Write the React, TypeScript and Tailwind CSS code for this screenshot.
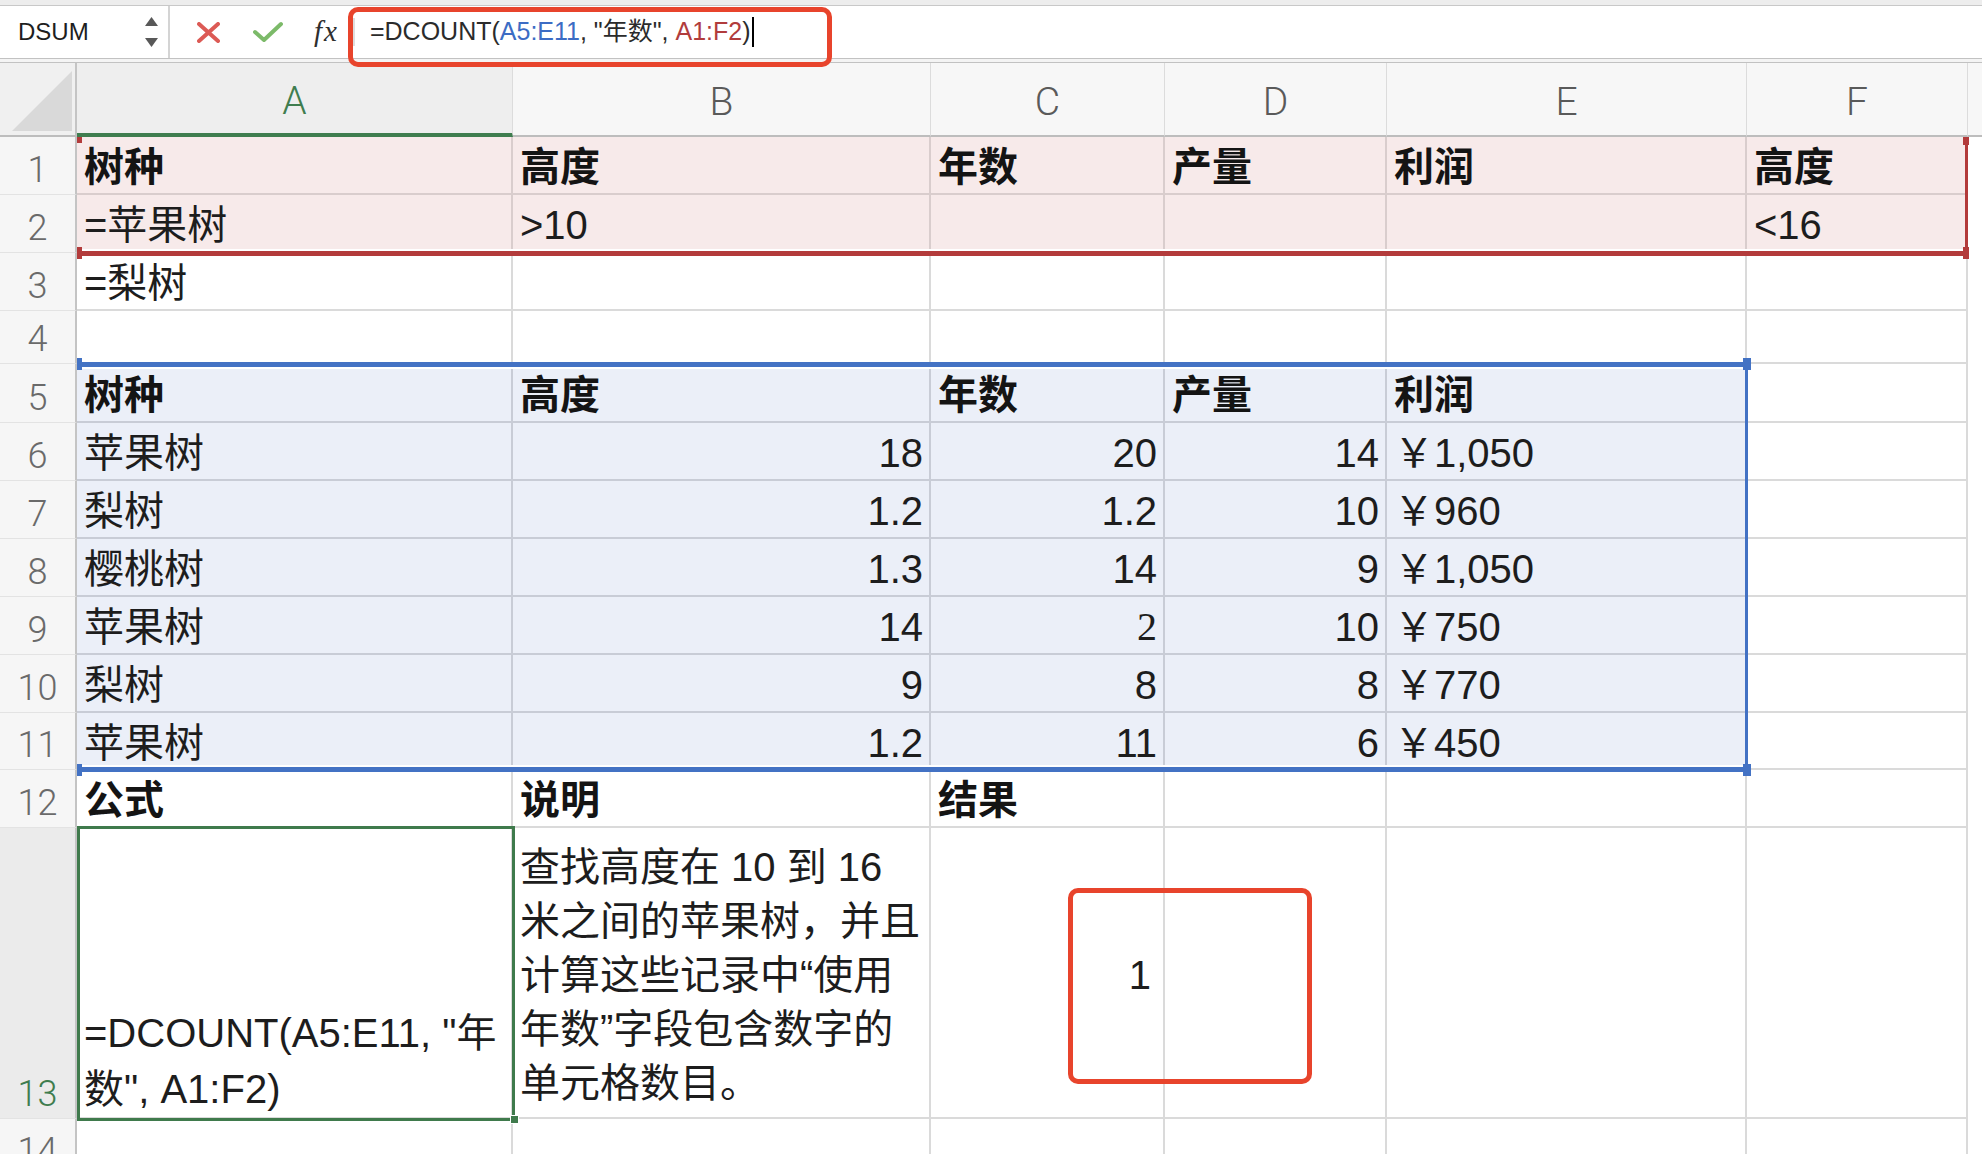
import React from "react";

type Tone = "white" | "pink" | "blue";

type CellSpec = {
  text?: string;
  right?: boolean;
  bold?: boolean;
  serif?: boolean;
};

function Cell({ spec, tone }: { spec: CellSpec; tone: Tone }) {
  const toneCls =
    tone === "pink"
      ? "bg-[#f7eaea] border-[#d9cdcd]"
      : tone === "blue"
      ? "bg-[#ebeff8] border-[#c8ccd6]"
      : "bg-white border-[#dadada]";
  return (
    <div
      className={`flex items-center overflow-hidden whitespace-nowrap border-r-2 border-b-2 pt-[4px] text-[40px] leading-[1.2] ${toneCls} ${
        spec.right ? "justify-end pr-[6px]" : "pl-[7px]"
      } ${spec.bold ? "font-bold text-[#141414]" : "text-[#1d1d1d]"} ${
        spec.serif ? "font-['Liberation_Serif',serif]" : ""
      }`}
    >
      {spec.text}
    </div>
  );
}

function RowHead({ n, active, top }: { n: number; active?: boolean; top?: boolean }) {
  return (
    <div
      className={`flex justify-center border-r-2 border-b border-r-[#c4c4c4] border-b-[#e3e3e3] font-['Roboto',sans-serif] text-[36px] font-light leading-none ${
        top ? "items-start pt-[14px]" : "items-end pb-[6px]"
      } ${active ? "bg-[#ebebeb] text-[#3f7d4f]" : "bg-[#f6f6f6] text-[#6a6a6a]"}`}
    >
      {n}
    </div>
  );
}

const b = (text: string): CellSpec => ({ text, bold: true });
const t = (text: string): CellSpec => ({ text });
const r = (text: string): CellSpec => ({ text, right: true });

const blueRow = (i: number): Tone => (i < 5 ? "blue" : "white");

const rows: { n: number; tone: (i: number) => Tone; cells: CellSpec[] }[] = [
  { n: 1, tone: () => "pink", cells: [b("树种"), b("高度"), b("年数"), b("产量"), b("利润"), b("高度")] },
  { n: 2, tone: () => "pink", cells: [t("=苹果树"), t(">10"), {}, {}, {}, t("<16")] },
  { n: 3, tone: () => "white", cells: [t("=梨树"), {}, {}, {}, {}, {}] },
  { n: 4, tone: () => "white", cells: [{}, {}, {}, {}, {}, {}] },
  { n: 5, tone: blueRow, cells: [b("树种"), b("高度"), b("年数"), b("产量"), b("利润"), {}] },
  { n: 6, tone: blueRow, cells: [t("苹果树"), r("18"), r("20"), r("14"), t("￥1,050"), {}] },
  { n: 7, tone: blueRow, cells: [t("梨树"), r("1.2"), r("1.2"), r("10"), t("￥960"), {}] },
  { n: 8, tone: blueRow, cells: [t("樱桃树"), r("1.3"), r("14"), r("9"), t("￥1,050"), {}] },
  { n: 9, tone: blueRow, cells: [t("苹果树"), r("14"), { text: "2", right: true, serif: true }, r("10"), t("￥750"), {}] },
  { n: 10, tone: blueRow, cells: [t("梨树"), r("9"), r("8"), r("8"), t("￥770"), {}] },
  { n: 11, tone: blueRow, cells: [t("苹果树"), r("1.2"), r("11"), r("6"), t("￥450"), {}] },
  { n: 12, tone: () => "white", cells: [b("公式"), b("说明"), b("结果"), {}, {}, {}] },
];

const cols = ["A", "B", "C", "D", "E", "F"];

export default function App() {
  return (
    <div className="relative h-[1154px] w-[1982px] overflow-hidden bg-white font-['Liberation_Sans','Noto_Sans_CJK_SC',sans-serif]">
      {/* toolbar strip */}
      <div className="h-[6px] border-b border-[#c8c8c8] bg-[#ededed]" />

      {/* formula bar */}
      <div className="flex h-[52px] items-center bg-white">
        <div className="flex h-full w-[170px] items-center border-r-2 border-[#d4d4d4] pl-[18px] pr-[10px]">
          <span className="text-[24px] text-[#1e1e1e]">DSUM</span>
          <div className="ml-auto flex flex-col gap-[12px]">
            <svg width="13" height="9" viewBox="0 0 13 9">
              <path d="M6.5 0 L13 9 L0 9 Z" fill="#585858" />
            </svg>
            <svg width="13" height="9" viewBox="0 0 13 9">
              <path d="M0 0 L13 0 L6.5 9 Z" fill="#585858" />
            </svg>
          </div>
        </div>
        <svg className="ml-[27px]" width="23" height="21" viewBox="0 0 23 21">
          <path d="M2 2 L21 19 M21 2 L2 19" stroke="#dc5a55" strokeWidth="4" strokeLinecap="round" />
        </svg>
        <svg className="ml-[33px]" width="30" height="22" viewBox="0 0 30 22">
          <path d="M2 11 L11 19 L28 3" stroke="#7cba69" strokeWidth="4" fill="none" strokeLinecap="round" strokeLinejoin="round" />
        </svg>
        <span className="ml-[31px] font-['Liberation_Serif',serif] text-[29px] italic tracking-[2px] text-[#2e2e2e]">fx</span>
        <div className="ml-[14px] h-[28px] w-[2px] bg-[#dedede]" />
        <span className="ml-[15px] whitespace-nowrap text-[25px] text-[#2b2b2b]">
          =DCOUNT(<span className="text-[#3c6cc4]">A5:E11</span>, "年数", <span className="text-[#b13c3c]">A1:F2</span>)
        </span>
        <div className="ml-[1px] h-[30px] w-[2px] bg-black" />
      </div>
      <div className="h-[5px] border-y border-[#c2c2c2] bg-[#f4f4f4]" />

      {/* sheet */}
      <div className="grid h-[1114px] grid-cols-[77px_436px_418px_234px_222px_360px_221px_1fr] grid-rows-[74px_58px_58px_58px_53px_59px_58px_58px_58px_58px_58px_57px_58px_291px_58px]">
        <div className="relative border-r-2 border-b-2 border-r-[#c4c4c4] border-b-[#bdbdbd] bg-[#f0f0f0]">
          <svg className="absolute left-[12px] top-[8px]" width="60" height="60" viewBox="0 0 60 60">
            <path d="M60 0 L60 60 L0 60 Z" fill="#d9d9d9" />
          </svg>
        </div>
        {cols.map((c) => (
          <div
            key={c}
            className={`flex items-center justify-center border-r pt-[6px] font-['Roboto',sans-serif] text-[39px] font-light ${
              c === "A"
                ? "border-b-4 border-r-[#dcdcdc] border-b-[#3f7d4f] bg-[#eeeeee] text-[#3f7d4f]"
                : "border-b-2 border-r-[#dcdcdc] border-b-[#bdbdbd] bg-[#f7f7f7] text-[#5a5a5a]"
            }`}
          >
            {c}
          </div>
        ))}
        <div className="border-b-2 border-b-[#bdbdbd] bg-[#f7f7f7]" />

        {rows.map((row) => (
          <React.Fragment key={row.n}>
            <RowHead n={row.n} />
            {row.cells.map((spec, i) => (
              <Cell key={i} spec={spec} tone={row.tone(i)} />
            ))}
            <div className="bg-white" />
          </React.Fragment>
        ))}

        {/* row 13 */}
        <RowHead n={13} active />
        <div className="flex items-end border-r-2 border-b-2 border-[#dadada] pl-[7px] text-[40px] leading-[56px] text-[#1d1d1d]">
          <div className="whitespace-nowrap">
            =DCOUNT(A5:E11, "年
            <br />
            数", A1:F2)
          </div>
        </div>
        <div className="flex items-center border-r-2 border-b-2 border-[#dadada] pl-[7px] pt-[4px] text-[40px] leading-[54px] text-[#1d1d1d]">
          <div className="whitespace-nowrap">
            查找高度在 10 到 16
            <br />
            米之间的苹果树，并且
            <br />
            计算这些记录中“使用
            <br />
            年数”字段包含数字的
            <br />
            单元格数目。
          </div>
        </div>
        <div className="flex items-center justify-end border-r-2 border-b-2 border-[#dadada] pr-[12px] pt-[4px] text-[40px] text-[#1d1d1d]">
          1
        </div>
        <div className="border-r-2 border-b-2 border-[#dadada]" />
        <div className="border-r-2 border-b-2 border-[#dadada]" />
        <div className="border-r-2 border-b-2 border-[#dadada]" />
        <div className="bg-white" />

        {/* row 14 */}
        <RowHead n={14} top />
        {cols.map((c) => (
          <div key={c} className="border-r-2 border-[#dadada]" />
        ))}
        <div className="bg-white" />
      </div>

      {/* criteria range A1:F2 (red) */}
      <div className="absolute left-[77px] top-[137px] h-[6px] w-[5px] bg-[#b33b3b]" />
      <div className="absolute left-[82px] top-[249px] h-[2px] w-[1884px] bg-white" />
      <div className="absolute left-[82px] top-[251px] h-[5px] w-[1886px] bg-[#b33b3b]" />
      <div className="absolute left-[77px] top-[247px] h-[12px] w-[5px] bg-[#b33b3b]" />
      <div className="absolute left-[1965px] top-[137px] h-[119px] w-[3px] bg-[#b33b3b]" />
      <div className="absolute left-[1963px] top-[137px] h-[8px] w-[6px] bg-[#b33b3b]" />
      <div className="absolute left-[1963px] top-[247px] h-[12px] w-[6px] bg-[#b33b3b]" />

      {/* database range A5:E11 (blue) */}
      <div className="absolute left-[82px] top-[362px] h-[5px] w-[1665px] bg-[#4372c4]" />
      <div className="absolute left-[82px] top-[367px] h-[2px] w-[1661px] bg-white" />
      <div className="absolute left-[77px] top-[358px] h-[12px] w-[5px] bg-[#4372c4]" />
      <div className="absolute left-[1745px] top-[362px] h-[410px] w-[3px] bg-[#4372c4]" />
      <div className="absolute left-[1743px] top-[358px] h-[12px] w-[8px] bg-[#4372c4]" />
      <div className="absolute left-[82px] top-[765px] h-[2px] w-[1661px] bg-white" />
      <div className="absolute left-[82px] top-[767px] h-[5px] w-[1665px] bg-[#4372c4]" />
      <div className="absolute left-[77px] top-[764px] h-[12px] w-[5px] bg-[#4372c4]" />
      <div className="absolute left-[1743px] top-[764px] h-[12px] w-[8px] bg-[#4372c4]" />

      {/* active cell A13 */}
      <div className="absolute left-[77px] top-[826px] h-[295px] w-[438px] border-[3px] border-[#3f7a4c]" />
      <div className="absolute left-[510px] top-[1115px] h-[9px] w-[9px] border border-white bg-[#3f7a4c]" />

      {/* annotation boxes */}
      <div className="absolute left-[348px] top-[7px] h-[60px] w-[484px] rounded-[10px] border-[5px] border-[#e8442c]" />
      <div className="absolute left-[1068px] top-[888px] h-[196px] w-[244px] rounded-[10px] border-[5px] border-[#e8442c]" />
    </div>
  );
}
